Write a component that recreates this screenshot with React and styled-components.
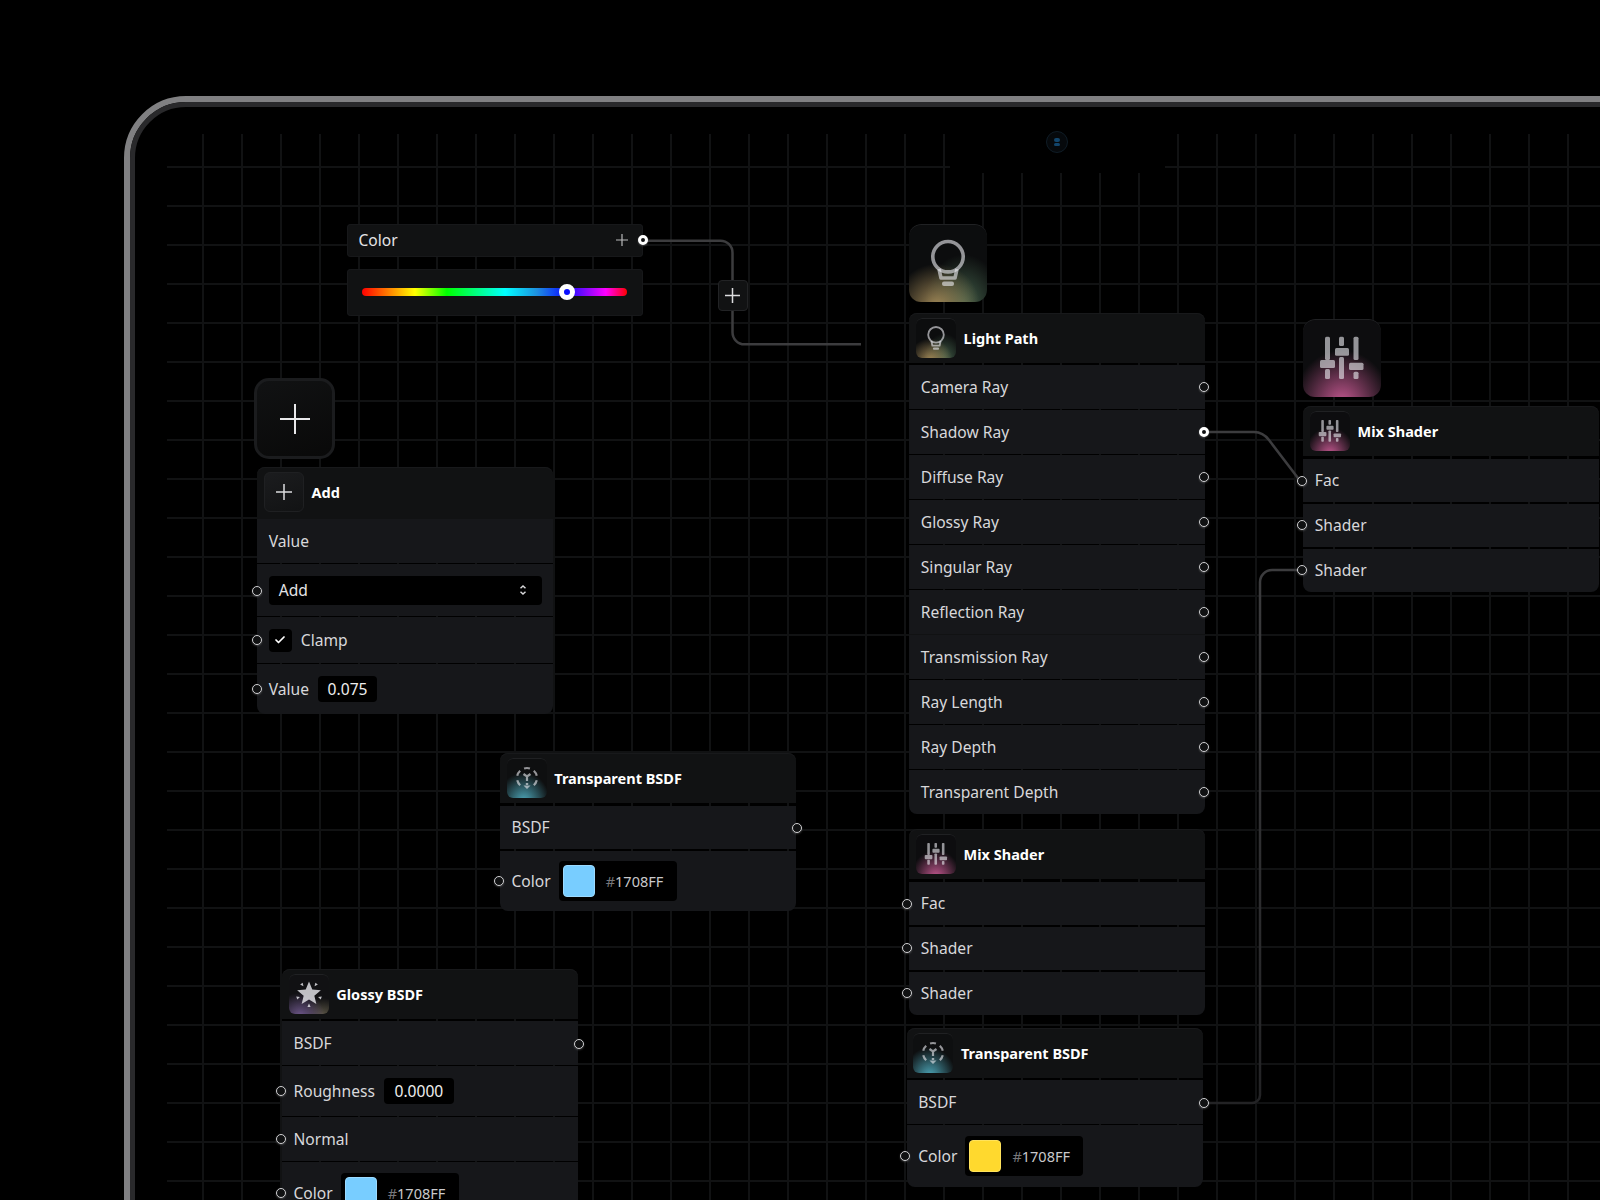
import React from "react";
import styled, { createGlobalStyle } from "styled-components";
import { Check } from "lucide-react";

const CANVAS_X = 167;
const CANVAS_Y = 134;

const GlobalStyle = createGlobalStyle`
  html, body {
    margin: 0;
    padding: 0;
    background: #000;
  }
  body {
    font-family: "Noto Sans", "Open Sans", sans-serif;
    color: #d8d8da;
    -webkit-font-smoothing: antialiased;
  }
`;

const Page = styled.div`
  width: 1600px;
  height: 1200px;
  padding: 96px 0 0 124px;
  box-sizing: border-box;
  overflow: hidden;
  background: #000;
`;

const Frame = styled.div`
  width: 1600px;
  height: 1200px;
  box-sizing: border-box;
  border: 6px solid #808082;
  border-radius: 62px;
`;

const Screen = styled.div`
  height: 100%;
  box-sizing: border-box;
  padding: 27px 0 0 32px;
  border: 5px solid #29292b;
  border-radius: 56px;
  background: #000;
`;

const Canvas = styled.div`
  position: relative;
  width: 1433px;
  height: 1066px;
  background-image: linear-gradient(to right, #111213 2px, transparent 2px),
    linear-gradient(to bottom, #111213 2px, transparent 2px);
  background-size: 39px 39px;
  background-position: 35px 0, 0 32px;
`;

const Notch = styled.div`
  position: absolute;
  left: ${950 - CANVAS_X}px;
  top: 0;
  width: 215px;
  height: ${173 - CANVAS_Y}px;
  background: #000;
`;

const Camera = styled.div`
  position: absolute;
  left: ${1057 - 950 - 11}px;
  top: ${142 - CANVAS_Y - 11}px;
  width: 22px;
  height: 22px;
  box-sizing: border-box;
  border-radius: 50%;
  background: #06090c;
  border: 1.5px solid #0f1c26;
  display: flex;
  flex-direction: column;
  align-items: center;
  justify-content: center;
  gap: 1px;

  &::before,
  &::after {
    content: "";
    width: 6px;
    height: 3.5px;
    border-radius: 2px;
    background: #12456b;
  }
`;

const Wires = styled.svg`
  position: absolute;
  left: 0;
  top: 0;
  width: 1433px;
  height: 1066px;
`;

const Node = styled.div`
  position: absolute;
  left: ${(p) => p.$x - CANVAS_X}px;
  top: ${(p) => p.$y - CANVAS_Y}px;
  width: 296px;
  display: flex;
  flex-direction: column;
  gap: 1.5px;
`;

const Head = styled.div`
  height: 50px;
  box-sizing: border-box;
  margin-bottom: 1.2px;
  padding-left: 6.7px;
  display: flex;
  align-items: center;
  gap: 7.6px;
  background: #111213;
  border-radius: 8px 8px 0 0;
  box-shadow: inset 0 1px 0 #18191b;
  color: #fff;
  font-size: 14.5px;
  font-weight: 700;
`;

const Row = styled.div`
  position: relative;
  height: ${(p) => p.$h || 43.5}px;
  flex: none;
  padding: 0 11.5px;
  display: flex;
  align-items: center;
  gap: ${(p) => p.$gap || 9}px;
  background: #16171a;
  font-size: 15.6px;
  color: #d8d8da;

  &:last-child {
    border-radius: 0 0 8px 8px;
  }
`;

const Port = styled.span`
  position: absolute;
  top: 50%;
  width: 10px;
  height: 10px;
  box-sizing: border-box;
  margin-top: ${(p) => -5 + (p.$lift || 0)}px;
  border-radius: 50%;
  background: #101112;
  border: ${(p) => (p.$active ? "3px solid #fff" : "1.5px solid #cfcfd1")};
  box-shadow: 0 1px 2px rgba(255, 255, 255, 0.22);
  ${(p) => (p.$right ? `right: ${-6 + (p.$shift || 0)}px;` : `left: ${-6.5 + (p.$shift || 0)}px;`)}
`;

const Tile = styled.div`
  flex: none;
  width: ${(p) => p.$size}px;
  height: ${(p) => p.$size}px;
  box-sizing: border-box;
  border-radius: ${(p) => (p.$size > 50 ? 12 : 6)}px;
  box-shadow: inset 0 1px 0 #202123;
  background: ${(p) => p.$glow};

  svg {
    display: block;
    width: 100%;
    height: 100%;
  }
`;

const FloatTile = styled(Tile)`
  position: absolute;
  left: ${(p) => p.$x - CANVAS_X}px;
  top: ${(p) => p.$y - CANVAS_Y}px;
`;

const AddTile = styled.div`
  position: absolute;
  left: ${254 - CANVAS_X}px;
  top: ${378 - CANVAS_Y}px;
  width: 81px;
  height: 81px;
  box-sizing: border-box;
  border: 3px solid #1b1c1e;
  border-radius: 15px;
  background: linear-gradient(160deg, #111213, #090909);
  display: flex;
  align-items: center;
  justify-content: center;
`;

const MiniAdd = styled.div`
  flex: none;
  width: 40px;
  height: 40px;
  box-sizing: border-box;
  border: 1px solid #1f2022;
  border-radius: 6px;
  background: linear-gradient(160deg, #1b1c1e, #121314);
  display: flex;
  align-items: center;
  justify-content: center;
`;

const Select = styled.div`
  flex: 1;
  height: 29px;
  padding: 0 15px 0 10px;
  border-radius: 4px;
  background: #000;
  display: flex;
  align-items: center;
  justify-content: space-between;
  color: #e4e4e6;
`;

const CheckBox = styled.div`
  flex: none;
  width: 23px;
  height: 23px;
  border-radius: 4px;
  background: #000;
  display: flex;
  align-items: center;
  justify-content: center;
`;

const ValueBox = styled.div`
  flex: none;
  width: ${(p) => p.$w}px;
  height: 26px;
  border-radius: 4px;
  background: #000;
  display: flex;
  align-items: center;
  justify-content: center;
  color: #eee;
`;

const ColorPill = styled.div`
  flex: none;
  width: 118px;
  height: 40px;
  box-sizing: border-box;
  padding: 4px;
  border-radius: 4px;
  background: #000;
  display: flex;
  align-items: center;
  gap: 11px;
  font-size: 14.5px;
  color: #c9c9cb;
`;

const Swatch = styled.span`
  width: 32px;
  height: 32px;
  box-sizing: border-box;
  border-radius: 4px;
  background: ${(p) => p.$color};
  border: 1px solid ${(p) => p.$edge};
`;

const Hash = styled.span`
  color: #77777a;
`;

const ColorHead = styled.div`
  position: absolute;
  left: ${346.5 - CANVAS_X}px;
  top: ${224 - CANVAS_Y}px;
  width: 296px;
  height: 32.7px;
  box-sizing: border-box;
  padding: 0 15px 0 12px;
  border-radius: 4px;
  background: #111213;
  box-shadow: inset 0 0 0 1px #17181a;
  display: flex;
  align-items: center;
  justify-content: space-between;
  font-size: 15.6px;
  color: #e4e4e6;
`;

const SliderCard = styled.div`
  position: absolute;
  left: ${346.5 - CANVAS_X}px;
  top: ${269.3 - CANVAS_Y}px;
  width: 296px;
  height: 46.4px;
  box-sizing: border-box;
  padding: 0 15.5px;
  border-radius: 4px;
  background: #111213;
  box-shadow: inset 0 0 0 1px #17181a;
  display: flex;
  align-items: center;
`;

const Track = styled.div`
  position: relative;
  width: 100%;
  height: 8px;
  border-radius: 4px;
  background: linear-gradient(
    to right,
    #ff0000 0%,
    #ffff00 20%,
    #00ff00 32%,
    #00ffff 54%,
    #1e90e0 66%,
    #0a10ff 77%,
    #ff00ff 92%,
    #ff0000 100%
  );
`;

const Thumb = styled.div`
  position: absolute;
  left: calc(${(p) => p.$at}% - 8px);
  top: -4px;
  width: 16px;
  height: 16px;
  box-sizing: border-box;
  border: 5px solid #fff;
  border-radius: 50%;
  background: #0a10ff;
`;

const WireButton = styled.div`
  position: absolute;
  left: ${717.5 - CANVAS_X}px;
  top: ${280 - CANVAS_Y}px;
  width: 30px;
  height: 31px;
  box-sizing: border-box;
  border: 1px solid #222325;
  border-radius: 4px;
  background: #111213;
  display: flex;
  align-items: center;
  justify-content: center;
`;

const Plus = ({ size, weight = 1.5, color = "#dcdcde" }) => (
  <svg width={size} height={size} viewBox={`0 0 ${size} ${size}`}>
    <path
      d={`M${size / 2} 0V${size}M0 ${size / 2}H${size}`}
      stroke={color}
      strokeWidth={weight}
      fill="none"
    />
  </svg>
);

const ICON_INK = "rgba(232,232,238,.62)";

const Bulb = () => (
  <svg viewBox="0 0 78 78">
    <circle cx="39" cy="32.7" r="15.2" fill="none" stroke={ICON_INK} strokeWidth="3.6" />
    <path d="M30 45l2 9h14l2-9" fill="none" stroke={ICON_INK} strokeWidth="3.6" strokeLinejoin="round" />
    <rect x="33" y="57.5" width="12" height="4.5" rx="2" fill={ICON_INK} />
  </svg>
);

const Sliders = () => (
  <svg viewBox="0 0 78 78" fill={ICON_INK}>
    <rect x="22" y="17.7" width="5" height="23.3" rx="1.5" />
    <rect x="17" y="41" width="15" height="8" rx="1.5" />
    <rect x="22" y="50" width="5" height="10" rx="1.5" />
    <rect x="36" y="17.7" width="5" height="9.3" rx="1.5" />
    <rect x="32" y="29" width="14" height="7.7" rx="1.5" />
    <rect x="36" y="38" width="5" height="22" rx="1.5" />
    <rect x="50.5" y="17.7" width="5" height="23.3" rx="1.5" />
    <rect x="46" y="43.7" width="14.5" height="7.3" rx="1.5" />
    <rect x="50.5" y="52.7" width="5" height="7.3" rx="1.5" />
  </svg>
);

const polar = (r, deg, cx = 20, cy = 20) => {
  const a = (deg * Math.PI) / 180;
  return `${(cx + r * Math.cos(a)).toFixed(2)} ${(cy + r * Math.sin(a)).toFixed(2)}`;
};

const arc = (mid) => `M${polar(10, mid - 17)}A10 10 0 0 1 ${polar(10, mid + 17)}`;

const Refract = () => (
  <svg viewBox="0 0 40 40" fill="none" stroke={ICON_INK} strokeWidth="2.2">
    {[270, 330, 30, 150, 210].map((mid) => (
      <path key={mid} d={arc(mid)} />
    ))}
    <path d="M16.5 16l3.5 2.5 3.5-2.5M20 18v5" />
    <path d="M16.5 27.5l3.5 3.5 3.5-3.5zM18.8 25h2.4v3h-2.4z" fill={ICON_INK} stroke="none" />
  </svg>
);

// five point star with a small wedge between each pair of points
const starPath = () => {
  const pts = [];
  for (let i = 0; i < 10; i++) {
    pts.push(polar(i % 2 ? 5.6 : 12.5, i * 36 - 90));
  }
  return `M${pts.join("L")}Z`;
};

const wedges = [-54, 18, 90, 162, 234].map(
  (deg) => `M${polar(9.5, deg)}L${polar(13, deg - 7)}L${polar(13, deg + 7)}Z`
);

const Star = () => (
  <svg viewBox="0 0 40 40" fill="rgba(235,235,240,.8)">
    <path d={starPath()} />
    {wedges.map((d) => (
      <path key={d} d={d} />
    ))}
  </svg>
);

const GLOW = {
  light:
    "radial-gradient(ellipse 55% 55% at 36% 106%, #a08756 0%, rgba(160,135,86,0) 100%), radial-gradient(ellipse 50% 65% at 70% 104%, #43604a 0%, rgba(67,96,74,0) 100%), #0c0d0e",
  mix: "radial-gradient(ellipse 62% 68% at 50% 108%, #c2578f 0%, rgba(194,87,143,0) 100%), #0d0d0f",
  refract: "radial-gradient(ellipse 65% 72% at 42% 108%, #4da6b8 0%, rgba(77,166,184,0) 100%), #0e0f10",
  gloss:
    "radial-gradient(ellipse 62% 58% at 28% 105%, #6f588c 0%, rgba(111,88,140,0) 100%), radial-gradient(ellipse 50% 45% at 85% 105%, #5c5746 0%, rgba(92,87,70,0) 100%), #111113",
};

const NodeTitle = ({ glow, icon, children }) => (
  <Head>
    <Tile $size={40} $glow={GLOW[glow]}>{icon}</Tile>
    {children}
  </Head>
);

const Pin = ({ right, active, shift, lift }) => (
  <Port $right={right} $active={active} $shift={shift} $lift={lift} />
);

const Color = ({ color, edge }) => (
  <ColorPill>
    <Swatch $color={color} $edge={edge} />
    <span><Hash>#</Hash>1708FF</span>
  </ColorPill>
);

const RAYS = [
  "Camera Ray",
  "Shadow Ray",
  "Diffuse Ray",
  "Glossy Ray",
  "Singular Ray",
  "Reflection Ray",
  "Transmission Ray",
  "Ray Length",
  "Ray Depth",
  "Transparent Depth",
];

const BLUE = { color: "#78cdff", edge: "#9bdaff" };
const YELLOW = { color: "#ffd92e", edge: "#ffe25c" };

function MixShader({ x, y, shift, lift }) {
  return (
    <Node $x={x} $y={y}>
      <NodeTitle glow="mix" icon={<Sliders />}>Mix Shader</NodeTitle>
      <Row><Pin shift={shift} lift={lift} />Fac</Row>
      <Row><Pin shift={shift} />Shader</Row>
      <Row><Pin shift={shift} />Shader</Row>
    </Node>
  );
}

function TransparentBsdf({ x, y, swatch, lastRow }) {
  return (
    <Node $x={x} $y={y}>
      <NodeTitle glow="refract" icon={<Refract />}>Transparent BSDF</NodeTitle>
      <Row>BSDF<Pin right lift={1} /></Row>
      <Row $h={lastRow} $gap={8}><Pin />Color<Color {...swatch} /></Row>
    </Node>
  );
}

export default function App() {
  return (
    <Page>
      <GlobalStyle />
      <Frame>
        <Screen>
          <Canvas>
            <Notch><Camera /></Notch>

            <Wires viewBox={`${CANVAS_X} ${CANVAS_Y} 1433 1066`} fill="none">
              <defs>
                <linearGradient id="wireFade" gradientUnits="userSpaceOnUse" x1="0" y1="570" x2="0" y2="1103">
                  <stop offset="0" stopColor="#3c3c3e" />
                  <stop offset="1" stopColor="#232325" />
                </linearGradient>
              </defs>
              <path d="M642 240.7H720.5a12 12 0 0 1 12 12V332.3a12 12 0 0 0 12 12H861" stroke="#3c3c3e" strokeWidth="2.5" />
              <path d="M1204 432H1254Q1263 432 1269 440L1301 482" stroke="#3c3c3e" strokeWidth="2.5" />
              <path d="M1204 1103H1252a8 8 0 0 0 8-8V582a12 12 0 0 1 12-12H1301" stroke="url(#wireFade)" strokeWidth="2.5" />
            </Wires>

            <ColorHead>
              Color
              <Plus size={12} weight={1.2} color="#b9b9bb" />
              <Port $right $active $shift={1} />
            </ColorHead>
            <SliderCard>
              <Track><Thumb $at={77.3} /></Track>
            </SliderCard>
            <WireButton><Plus size={15} /></WireButton>

            <AddTile><Plus size={30} weight={2} color="#e8e8ea" /></AddTile>
            <Node $x={257.3} $y={466.7}>
              <Head>
                <MiniAdd><Plus size={16} /></MiniAdd>
                Add
              </Head>
              <Row>Value</Row>
              <Row $h={51.5}>
                <Pin shift={1.5} lift={1} />
                <Select>
                  Add
                  <svg width="8" height="12" viewBox="0 0 8 12" fill="none" stroke="#d8d8da" strokeWidth="1.5">
                    <path d="M1.5 4.2L4 2l2.5 2.2M1.5 7.8L4 10l2.5-2.2" />
                  </svg>
                </Select>
              </Row>
              <Row $h={45.5}>
                <Pin shift={1.5} />
                <CheckBox><Check size={12} strokeWidth={3.5} color="#fff" /></CheckBox>
                Clamp
              </Row>
              <Row $h={49.5}>
                <Pin shift={1.5} />
                Value
                <ValueBox $w={59}>0.075</ValueBox>
              </Row>
            </Node>

            <FloatTile $x={909} $y={224} $size={78} $glow={GLOW.light}><Bulb /></FloatTile>
            <Node $x={909.3} $y={312.8}>
              <NodeTitle glow="light" icon={<Bulb />}>Light Path</NodeTitle>
              {RAYS.map((ray, i) => (
                <Row key={ray}>
                  {ray}
                  <Pin right active={i === 1} shift={2} />
                </Row>
              ))}
            </Node>

            <FloatTile $x={1303.3} $y={319} $size={78} $glow={GLOW.mix}><Sliders /></FloatTile>
            <MixShader x={1303.3} y={405.9} lift={1} />
            <MixShader x={909.3} y={829} shift={-1} lift={1} />

            <TransparentBsdf x={500} y={753} swatch={BLUE} lastRow={60.5} />
            <TransparentBsdf x={906.7} y={1027.7} swatch={YELLOW} lastRow={61.5} />

            <Node $x={282} $y={968.8}>
              <NodeTitle glow="gloss" icon={<Star />}>Glossy BSDF</NodeTitle>
              <Row>BSDF<Pin right lift={1} /></Row>
              <Row $h={49.5}>
                <Pin />
                Roughness
                <ValueBox $w={70}>0.0000</ValueBox>
              </Row>
              <Row><Pin />Normal</Row>
              <Row $h={60.5} $gap={8}><Pin />Color<Color {...BLUE} /></Row>
            </Node>
          </Canvas>
        </Screen>
      </Frame>
    </Page>
  );
}
